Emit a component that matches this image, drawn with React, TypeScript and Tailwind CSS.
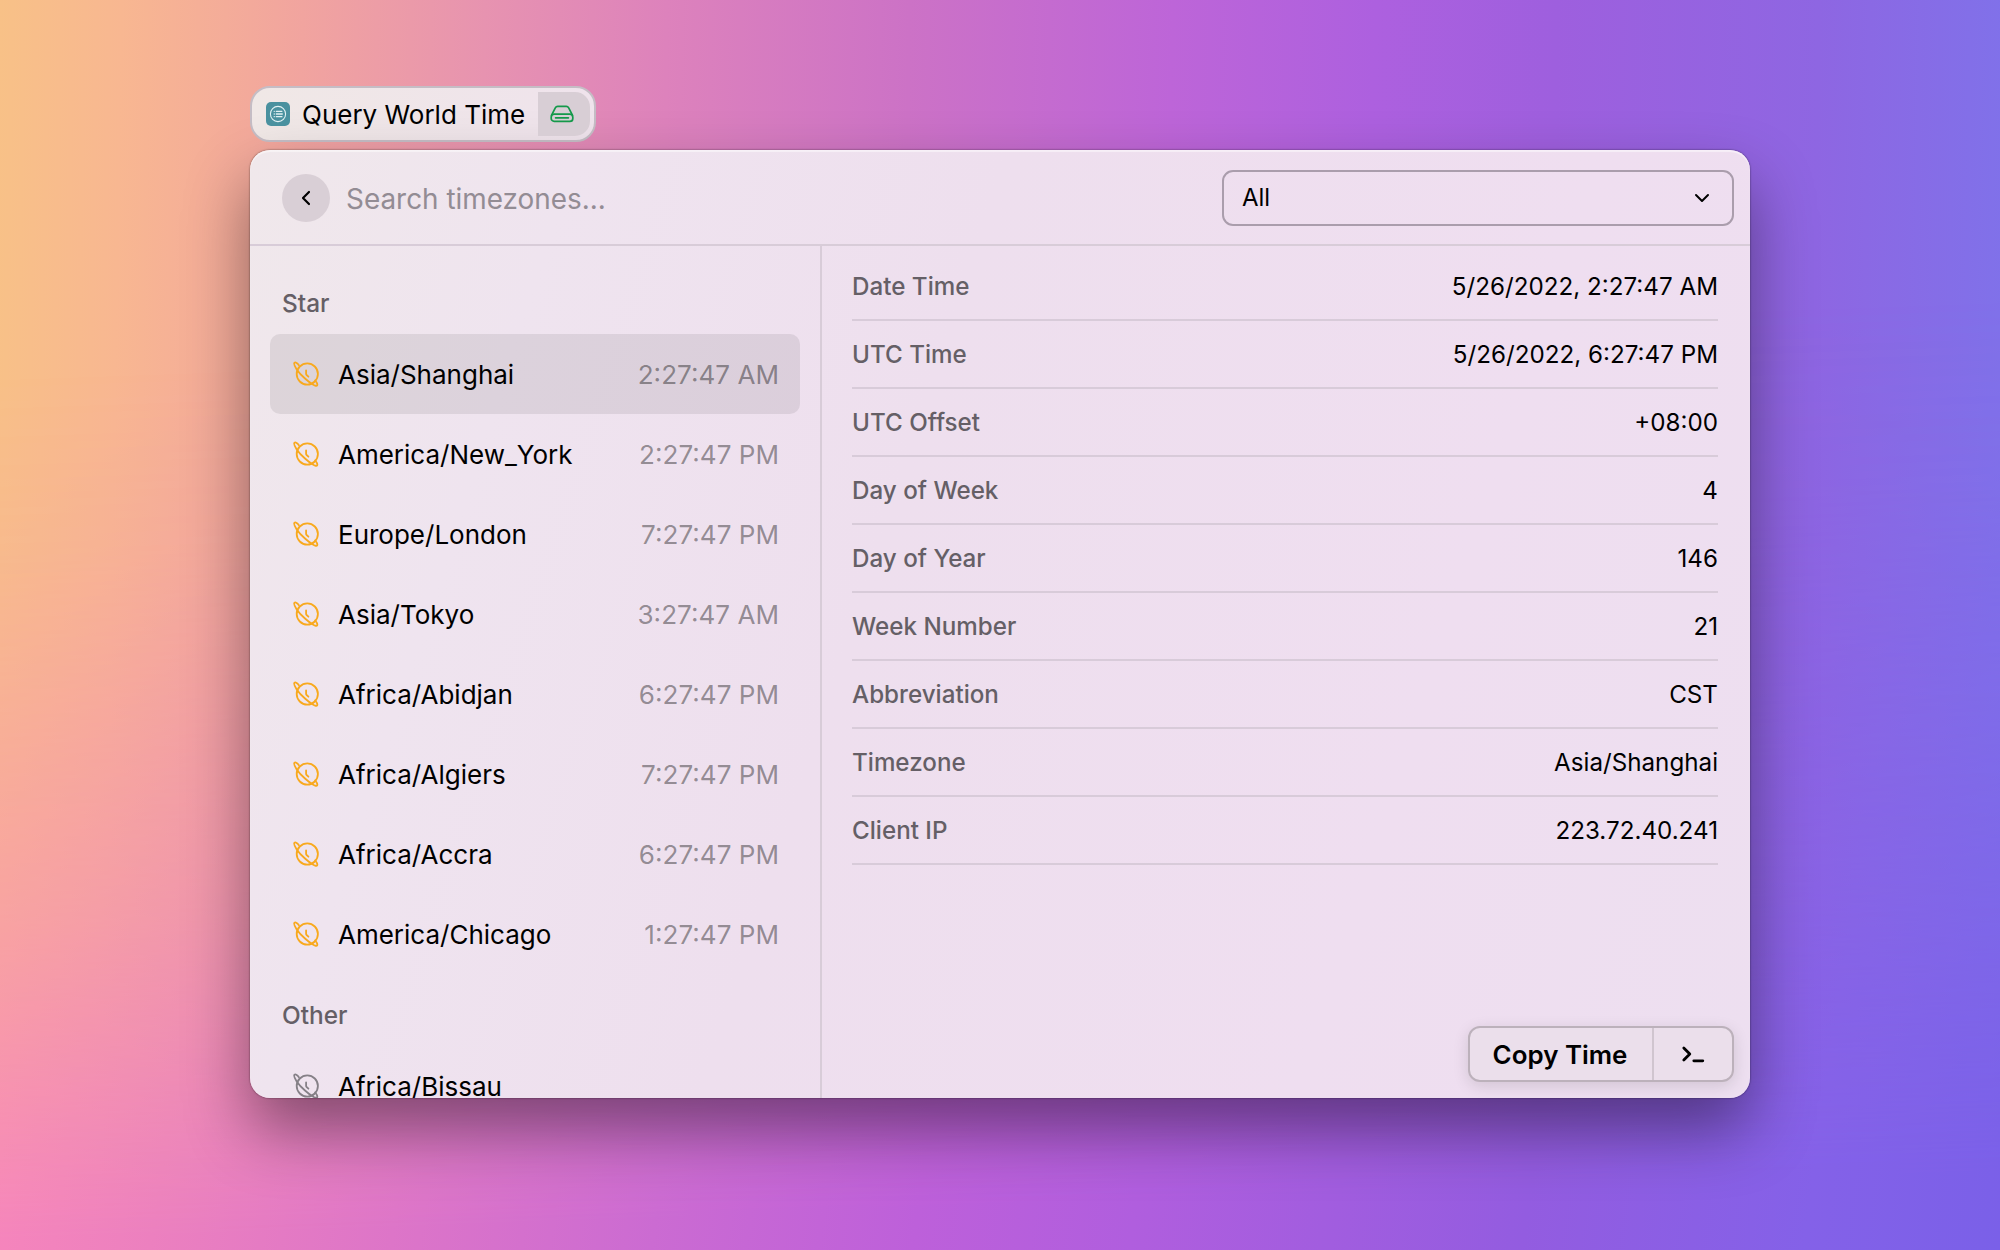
import React from "react";

const zones: [string, string][] = [
  ["Asia/Shanghai", "2:27:47 AM"],
  ["America/New_York", "2:27:47 PM"],
  ["Europe/London", "7:27:47 PM"],
  ["Asia/Tokyo", "3:27:47 AM"],
  ["Africa/Abidjan", "6:27:47 PM"],
  ["Africa/Algiers", "7:27:47 PM"],
  ["Africa/Accra", "6:27:47 PM"],
  ["America/Chicago", "1:27:47 PM"],
];

const details: [string, string][] = [
  ["Date Time", "5/26/2022, 2:27:47 AM"],
  ["UTC Time", "5/26/2022, 6:27:47 PM"],
  ["UTC Offset", "+08:00"],
  ["Day of Week", "4"],
  ["Day of Year", "146"],
  ["Week Number", "21"],
  ["Abbreviation", "CST"],
  ["Timezone", "Asia/Shanghai"],
  ["Client IP", "223.72.40.241"],
];

function PlanetClock({ className }: { className: string }) {
  return (
    <svg viewBox="0 0 26 28" className={"h-7 w-[26px] shrink-0 " + className} fill="none" stroke="currentColor" strokeWidth="1.8" strokeLinecap="round" strokeLinejoin="round">
      <circle cx="14.3" cy="14" r="10.6" />
      <path d="M5.900 5.300C4.600 3.400 2.600 1.900 1.500 2.700.4 3.600 1.700 6.300 3.700 9.400 5.700 12.300 8.600 15.500 12 18.500c3.300 3 6 4.900 8.300 6.200 1.900 1.100 3.400 1.500 3.900.6.5-1-.5-3-2-4.800" />
      <path d="M13.100 10.500v3.300q0 .6.400 1l1.900 1.900" />
    </svg>
  );
}

function Row({ name, time, selected, muted }: { name: string; time: string; selected?: boolean; muted?: boolean }) {
  return (
    <div className={"flex h-20 shrink-0 items-center rounded-[10px] pl-[23px] pr-[21px] " + (selected ? "bg-black/[0.08]" : "")}>
      <PlanetClock className={muted ? "text-[#858087]" : "text-[#f8a91e]"} />
      <span className="ml-[19px] flex-1 pt-0.5 text-[26px] leading-8 text-black">{name}</span>
      <span className="pt-0.5 text-[26.1px] leading-8 text-black/40">{time}</span>
    </div>
  );
}

export default function App() {
  return (
    <div className="relative isolate h-[1250px] w-[2000px] overflow-hidden pl-[250px] pt-[86px] font-['Inter',sans-serif]">
      <div className="absolute inset-0 -z-20 bg-[linear-gradient(91deg,#f8c187_0%,#f8b791_6%,#f1a49f_15%,#e793b0_24%,#dd82bc_33%,#cc72c6_45%,#bd65d8_58%,#ad60df_68%,#9e5fde_77%,#8e66e2_90%,#7f72ea_100%)]" />
      <div className="absolute inset-0 -z-10 bg-[linear-gradient(98deg,#fd8abb_0%,#f886bb_6%,#ec80bf_15%,#dd75c8_26%,#cb6bd2_38%,#bd60da_50%,#b05ede_60%,#935ce0_78%,#8461e8_91%,#7a60e8_100%)] [mask-image:linear-gradient(178deg,transparent_28%,rgba(0,0,0,0.1)_42%,rgba(0,0,0,0.5)_70%,black_94%)]" />

      <div className="flex h-14 w-[346px] items-center rounded-[20px] border-2 border-[#c5bdc5] bg-[linear-gradient(90deg,#f0e8e6,#efe3ec)] pl-3.5 pr-1">
        <svg viewBox="0 0 24 24" className="size-6 shrink-0" fill="none" stroke="#e2f1f3" strokeLinecap="round">
          <rect width="24" height="24" rx="5" fill="#4a919f" stroke="none" />
          <circle cx="12" cy="12" r="7.600" strokeWidth="1.100" />
          <path d="M8.200 9.300h.1M8.200 12h.1M8.200 14.700h.1M10.300 9.300h5.600M10.300 12h6M10.300 14.700h5.600" strokeWidth="1.300" />
        </svg>
        <span className="ml-3 flex-1 whitespace-nowrap pt-px text-[26px] leading-8 text-black">Query World Time</span>
        <div className="flex h-11 w-[52px] items-center justify-center rounded-r-[15px] bg-[#d8ced5]">
          <svg viewBox="0 0 24 18" className="h-[18px] w-6 -translate-x-[2px]" fill="none" stroke="#14994a" strokeWidth="1.700" strokeLinecap="round" strokeLinejoin="round">
            <path d="M1.600 10.200 5.300 2.800Q6.100 1.400 7.700 1.400h8.600q1.600 0 2.400 1.400l3.700 7.400" />
            <rect x="1.200" y="9.200" width="21.600" height="7.200" rx="3" />
            <path d="M5.600 12.800h12.800" />
          </svg>
        </div>
      </div>

      <div className="mt-2 flex h-[948px] w-[1500px] flex-col overflow-hidden rounded-[20px] bg-[linear-gradient(108deg,#f0e8eb_0%,#efe4ef_18%,#eedfee_42%,#efdef0_75%,#eddff0_100%)] shadow-[0_0_2px_rgba(0,0,0,0.6),0_32px_64px_rgba(0,0,0,0.42),inset_0_2px_1px_rgba(255,255,255,0.5)]">
        <header className="flex h-24 shrink-0 items-center border-b-2 border-[#d8ccd8] pl-8 pr-4 pt-0.5">
          <div className="flex size-12 items-center justify-center rounded-full bg-[#d9cfd6]">
            <svg viewBox="0 0 10 16" className="h-4 w-2.5" fill="none" stroke="black" strokeWidth="2.200" strokeLinecap="round" strokeLinejoin="round">
              <path d="M8 2 2 8l6 6" />
            </svg>
          </div>
          <span className="ml-4 flex-1 pt-0.5 text-[27.9px] leading-9 text-[#938c94]">Search timezones...</span>
          <div className="flex h-14 w-[512px] items-center justify-between rounded-[11px] border-2 border-[#aa9dac] pl-[18px] pr-[22px]">
            <span className="text-2xl text-black">All</span>
            <svg viewBox="0 0 16 10" className="h-2.5 w-4" fill="none" stroke="black" strokeWidth="2" strokeLinecap="round" strokeLinejoin="round">
              <path d="m2 2 6 6 6-6" />
            </svg>
          </div>
        </header>

        <div className="flex min-h-0 flex-1">
          <aside className="flex w-[572px] shrink-0 flex-col overflow-hidden border-r-2 border-[#d8ccd8] px-5">
            <h2 className="h-[88px] shrink-0 pl-3 pt-[41px] text-[24.4px] font-medium leading-8 text-[#655f66]">Star</h2>
            {zones.map(([name, time], i) => (
              <Row key={name} name={name} time={time} selected={i === 0} />
            ))}
            <h2 className="h-[72px] shrink-0 pl-3 pt-[25px] text-[24.4px] font-medium leading-8 text-[#655f66]">Other</h2>
            <Row name="Africa/Bissau" time="" muted />
          </aside>

          <main className="flex flex-1 flex-col pl-[30px] pr-4">
            <dl className="mr-4 pt-[7px]">
              {details.map(([label, value]) => (
                <div key={label} className="flex h-[68px] items-center justify-between border-b-2 border-[#d8cbd9] pt-0.5 text-[24.2px]">
                  <dt className="font-medium text-[#655f66]">{label}</dt>
                  <dd className="text-black">{value}</dd>
                </div>
              ))}
            </dl>
            <div className="mb-4 ml-auto mt-auto flex h-14 w-[266px] rounded-[12px] border-2 border-[#bcb1bb] bg-[#ebdfeb] shadow-[0_4px_16px_rgba(0,0,0,0.12)]">
              <div className="flex flex-1 items-center justify-center pr-0.5 pt-0.5 text-[25.9px] font-semibold text-black">Copy Time</div>
              <div className="flex w-20 items-center justify-center border-l-2 border-[#d0c5cf]">
                <svg viewBox="0 0 24 18" className="h-[18px] w-6" fill="none" stroke="black" strokeWidth="2.800" strokeLinecap="round" strokeLinejoin="round">
                  <path d="m2.800 3 6 6-6 6M12.800 15.800h9" />
                </svg>
              </div>
            </div>
          </main>
        </div>
      </div>
    </div>
  );
}
